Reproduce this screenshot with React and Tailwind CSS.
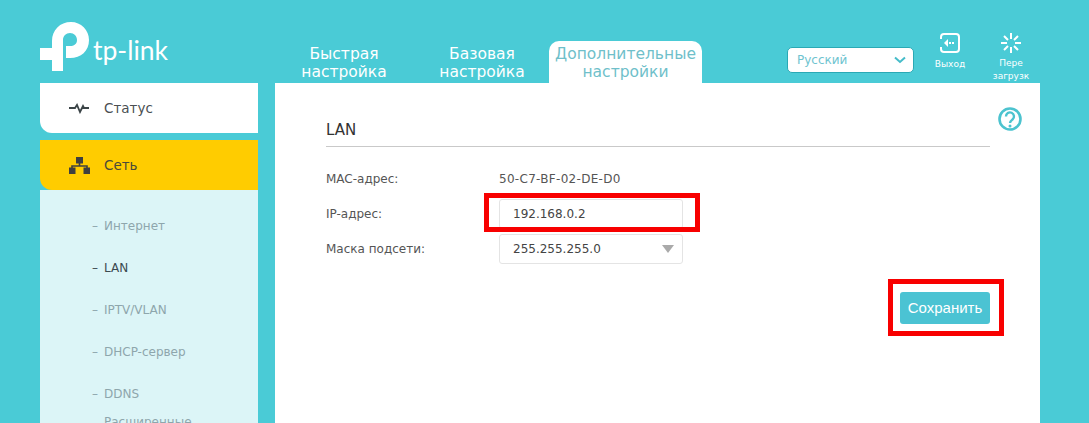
const font = "font-['DejaVu_Sans',sans-serif]";

function Logo() {
  return (
    <div className="flex items-start w-[240px] pl-[40px] pt-[22px]">
      <svg width="50" height="50" viewBox="0 0 50 50" className="shrink-0">
        <path d="M0 26h12v-7C12 8 20 0 31 0c10 0 18 8 18 18 0 11-8 18-19 18h-4V24h4c4 0 7-2 7-6s-3-7-7-7-7 3-7 7v31H12V38H0z" fill="#fff" />
      </svg>
      <span className="ml-[3px] mt-[13px] font-['Lato',sans-serif] text-[26.5px] leading-[30px] text-white">tp-link</span>
    </div>
  );
}

function Tab({ line1, line2, active, w }) {
  return (
    <div
      className={`${w} h-[42px] text-center text-[15.5px] leading-[18px] pt-[4px] rounded-t-[10px] ${
        active ? "bg-white text-[#6fbfca]" : "text-white"
      }`}
    >
      <div>{line1}</div>
      <div>{line2}</div>
    </div>
  );
}

function Header() {
  return (
    <div className="flex h-[83px]">
      <Logo />
      <div className="flex items-end w-[462px] pl-[35px]">
        <Tab line1="Быстрая" line2="настройка" w="w-[138px]" />
        <Tab line1="Базовая" line2="настройка" w="w-[138px]" />
        <Tab line1="Дополнительные" line2="настройки" w="w-[153px] -ml-[2px]" active />
      </div>
      <div className="w-[85px]" />
      <div className="w-[127px] h-[26px] mt-[47px] bg-white rounded-[5px] border border-[#2aa9b5] flex items-center justify-between pl-[9px] pr-[6px] text-[12px] text-[#6fc4d0]">
        <span>Русский</span>
        <svg width="14" height="10" viewBox="0 0 14 10">
          <path d="M2 2.500l5 4.500 5-4.500" fill="none" stroke="#45bcc9" strokeWidth="2" />
        </svg>
      </div>
      <div className="w-[72px] flex flex-col items-center pt-[33px]">
        <svg width="20" height="20" viewBox="0 0 20 20">
          <path d="M1 14v2a3 3 0 0 0 3 3h12a3 3 0 0 0 3-3V4a3 3 0 0 0-3-3H4a3 3 0 0 0-3 3v2" fill="none" stroke="#fff" strokeWidth="2" />
          <path d="M8 6l-4 4 4 4zM9 9h2v2H9zM12 9h2v2h-2z" fill="#fff" />
        </svg>
        <span className="text-[9px] leading-[10px] mt-[6px] text-white">Выход</span>
      </div>
      <div className="w-[54px] flex flex-col items-center pt-[32px] -ml-[2px]">
        <svg width="22" height="22" viewBox="0 0 22 22" stroke="#fff" strokeWidth="2">
          <path d="M11 1v6M11 15v6M1 11h6M15 11h6M4 4l4 4M14 14l4 4M18 4l-4 4M8 14l-4 4" />
        </svg>
        <span className="text-[9px] leading-[13px] mt-[3px] text-white text-center whitespace-nowrap">
          Пере
          <br />
          загрузк
        </span>
      </div>
    </div>
  );
}

function Sidebar() {
  const items = [
    ["Интернет", false],
    ["LAN", true],
    ["IPTV/VLAN", false],
    ["DHCP-сервер", false],
    ["DDNS", false],
  ];
  return (
    <div className="w-[218px] ml-[40px] shrink-0">
      <div className="h-[50px] bg-white rounded-bl-[12px] flex items-center pl-[29px] text-[13.5px] text-[#4a4f52]">
        <svg width="21" height="12" viewBox="0 0 21 12" className="mr-[14px]">
          <path d="M0 6h6l2-3 3 7 3-6 1 2h5" fill="none" stroke="#3b4447" strokeWidth="1.800" />
        </svg>
        Статус
      </div>
      <div className="h-[50px] mt-[7px] bg-[#ffcc00] rounded-bl-[12px] flex items-center pl-[29px] text-[13.5px] text-[#4a4a3a]">
        <svg width="21" height="17" viewBox="0 0 21 17" className="mr-[14px]">
          <path d="M7 0h7v6.500H7zM0 10.500h6.500V17H0zM14.500 10.500H21V17h-6.500z" fill="#3f3f3f" />
          <path d="M10.500 6v3M3 11V9h15v2" fill="none" stroke="#3f3f3f" strokeWidth="1.600" />
        </svg>
        Сеть
      </div>
      <div className="h-[300px] bg-[#dcf5f7] pl-[52px] pt-[15px] text-[12px]">
        {items.map(([label, on]) => (
          <div key={label} className={`h-[42px] flex items-center ${on ? "text-[#3b4a50]" : "text-[#8ea6ac]"}`}>
            <span className="w-[12px]">–</span>
            {label}
          </div>
        ))}
        <div className="pl-[12px] text-[#8ea6ac] -mt-[2px]">Расширенные</div>
      </div>
    </div>
  );
}

function Row({ label, children }) {
  return (
    <div className="flex items-center text-[12px] text-[#555]">
      <div className="w-[173px]">{label}</div>
      {children}
    </div>
  );
}

function Main() {
  return (
    <div className="relative w-[765px] ml-[17px] h-[340px] bg-white pl-[51px] pr-[50px] pt-[37px]">
      <div className="h-[27px] border-b border-[#c9c9c9] text-[15px] leading-[20px] text-[#333]">LAN</div>
      <svg width="26" height="26" viewBox="0 0 26 26" className="absolute right-[17px] top-[23px]">
        <circle cx="13" cy="13" r="10.500" fill="none" stroke="#4cc3cf" strokeWidth="2.600" />
        <path d="M9 10.500a4 4 0 1 1 6.500 3c-1.500 1.200-2.500 1.800-2.500 3.500" fill="none" stroke="#4cc3cf" strokeWidth="2.400" />
        <circle cx="13" cy="20" r="1.500" fill="#4cc3cf" />
      </svg>
      <div className="mt-[23px] h-[22px]">
        <Row label="MAC-адрес:">
          <span className="tracking-[0.3px]">50-C7-BF-02-DE-D0</span>
        </Row>
      </div>
      <div className="mt-[7px]">
        <Row label="IP-адрес:">
          <div className="w-[184px] h-[30px] border border-[#e4e4e4] rounded-[3px] flex items-center pl-[13px] text-[#444]">192.168.0.2</div>
        </Row>
      </div>
      <div className="mt-[5px]">
        <Row label="Маска подсети:">
          <div className="w-[184px] h-[30px] border border-[#e4e4e4] rounded-[3px] flex items-center justify-between pl-[13px] pr-[8px] text-[#444]">
            255.255.255.0
            <span className="w-0 h-0 border-x-[6px] border-x-transparent border-t-[8px] border-t-[#aaa]" />
          </div>
        </Row>
      </div>
      <div className="flex justify-end mt-[28px]">
        <button className="w-[90px] h-[32px] bg-[#4bc3d3] rounded-[3px] text-white text-[15px] font-['Liberation_Sans',sans-serif]">Сохранить</button>
      </div>
      <div className="absolute left-[209px] top-[110px] w-[216px] h-[39px] border-[5px] border-[#f80000]" />
      <div className="absolute left-[613px] top-[196px] w-[116px] h-[57px] border-[5px] border-[#f80000]" />
    </div>
  );
}

export default function App() {
  return (
    <div className={`h-[423px] w-[1089px] overflow-hidden bg-[#4acbd6] ${font}`}>
      <Header />
      <div className="flex">
        <Sidebar />
        <Main />
      </div>
    </div>
  );
}
